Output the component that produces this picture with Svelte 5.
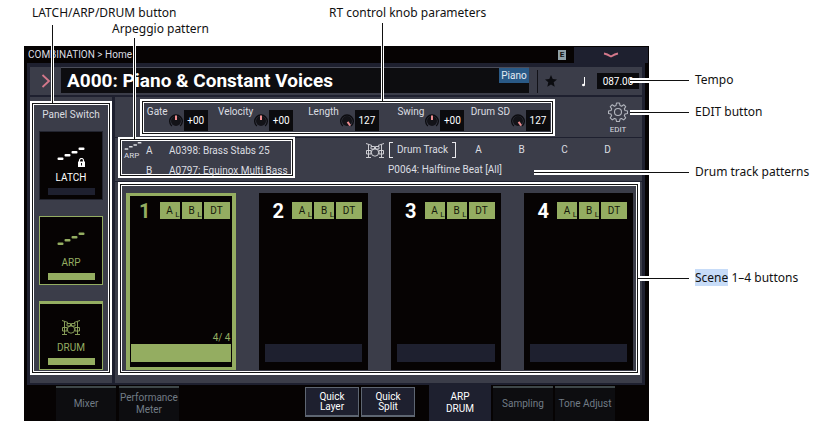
<script>
  const knobs = [
    { label: 'Gate', value: '+00', angle: 0 },
    { label: 'Velocity', value: '+00', angle: 0 },
    { label: 'Length', value: '127', angle: 145 },
    { label: 'Swing', value: '+00', angle: 0 },
    { label: 'Drum SD', value: '127', angle: 145 }
  ];
  const scenes = [1, 2, 3, 4];
  const patterns = ['A', 'B', 'C', 'D'];
  let active = $state(1);
</script>

{#snippet steps()}
  <svg class="steps" viewBox="0 0 28 16" aria-hidden="true">
    <g fill="currentColor">
      <rect x="0.500" y="11.500" width="6" height="2.500" rx="1" />
      <rect x="7.500" y="8" width="6" height="2.500" rx="1" />
      <rect x="14.500" y="5" width="6" height="2.500" rx="1" />
      <rect x="21.500" y="1.500" width="6" height="2.500" rx="1" />
    </g>
  </svg>
{/snippet}

{#snippet drums()}
  <svg class="drums" viewBox="0 0 20 16" aria-hidden="true" fill="none" stroke="currentColor" stroke-width="0.900">
    <circle cx="10" cy="10.500" r="3.700" />
    <path d="M1 1.500l6 2M13 3.500l6-2M3.500 2.500V15M16.500 2.500V15M1 15.500h5M14 15.500h5" />
    <path d="M6 4.500h3.500V7H6zM10.500 4.500H14V7h-3.500z" />
    <path d="M1.500 8.500H6V12H1.500zM14 8.500h4.500V12H14z" />
  </svg>
{/snippet}

<div class="figure">
  <div class="notes">
    <div class="first"><span>LATCH/ARP/DRUM button</span><span>RT control knob parameters</span></div>
    <div class="second">Arpeggio pattern</div>
  </div>

  <div class="stage">
    <main class="screen">
      <header>
        <span class="crumb">COMBINATION &gt; Home</span>
        <span class="ext">E</span>
        <button class="pull" aria-label="Open menu">
          <svg width="18" height="6" viewBox="0 0 18 6" fill="none" stroke="#d4788b" stroke-width="1.800"><path d="M2 1.500Q5 2 9 4.500Q13 2 16 1.500" /></svg>
        </button>
      </header>

      <div class="panel">
        <div class="titlebar">
          <button class="go" aria-label="Select program">
            <svg width="10" height="16" viewBox="0 0 10 16" fill="none" stroke="#d4788b" stroke-width="1.800"><path d="M1.500 2l6.500 6-6.500 6" /></svg>
          </button>
          <div class="title"><h1>A000: Piano &amp; Constant Voices</h1><span class="cat">Piano</span></div>
          <i class="bar"></i>
          <button class="star" aria-label="Favorite">
            <svg width="12" height="12" viewBox="0 0 12 12"><path fill="#0b0c10" d="M6 0l1.700 4.100 4.300.3-3.300 2.900 1 4.400L6 9.400l-3.700 2.300 1-4.400L0 4.400l4.300-.3z" /></svg>
          </button>
          <svg class="note" width="6" height="11" viewBox="0 0 6 11"><path d="M4 1h1v8H4z" fill="#fff" /><ellipse cx="3.500" cy="9" rx="1.500" ry="1.200" fill="#fff" /></svg>
          <input class="tempo" aria-label="Tempo" value="087.00" />
        </div>

        <div class="columns">
          <section class="side">
            <div class="frame switches">
              <h2>Panel Switch</h2>
              <button class="switch latch">
                <span class="pic">{@render steps()}
                  <svg class="lock" width="7" height="9" viewBox="0 0 7 9"><path d="M1.500 4V2.500a2 2 0 014 0V4" fill="none" stroke="#fff" stroke-width="1.200" /><path d="M0 3.500h7V9H0z" fill="#fff" /><path d="M3 5h1v2.500H3z" fill="#111" /></svg>
                </span>
                <span>LATCH</span><i></i>
              </button>
              <button class="switch on"><span class="pic">{@render steps()}</span><span>ARP</span><i></i></button>
              <button class="switch on drum"><span class="pic">{@render drums()}</span><span>DRUM</span><i></i></button>
            </div>
          </section>

          <section class="content">
            <div class="controls">
              <div class="frame knobs">
                {#each knobs as knob}
                  <label class="knob">
                    <span>{knob.label}</span>
                    <svg width="14" height="14" viewBox="0 0 14 14">
                      <circle cx="7" cy="7" r="5" fill="#131318" />
                      <path d="M2.800 12A6.300 6.300 0 1111.200 12" fill="none" stroke="#0c0c10" stroke-width="1.400" />
                      <path d="M7 1.500V6" stroke="#f08d90" stroke-width="2" transform="rotate({knob.angle} 7 7)" />
                    </svg>
                    <input value={knob.value} />
                  </label>
                {/each}
              </div>
              <button class="edit">
                <svg width="20" height="20" viewBox="0 0 20 20" fill="none" stroke="#b3b6be" stroke-width="1.100" stroke-linejoin="round">
                  <path d="M8.500 1h3l.5 2.500 1.600.7L15.700 2.700l2 2-1.400 2.200.7 1.600 2.500.5v2.500l-2.500.5-.7 1.700 1.400 2.100-2 2.100-2.200-1.400-1.500.6-.5 2.400h-3L8 17.100l-1.600-.6-2.100 1.400-2.100-2.100 1.400-2.100-.7-1.700L.5 11.500V9L3 8.500l.7-1.600L2.300 4.700l2-2L6.400 4.200 8 3.500z" />
                  <circle cx="10" cy="10" r="3.500" />
                </svg>
                <span>EDIT</span>
              </button>
            </div>

            <div class="assign">
              <div class="frame arps">
                <div class="arpmark">{@render steps()}<b>ARP</b></div>
                <dl><dt>A</dt><dd>A0398: Brass Stabs 25</dd><dt>B</dt><dd>A0797: Equinox Multi Bass</dd></dl>
              </div>
              <div class="track">
                <div class="trackrow">
                  {@render drums()}
                  <span class="bracket">Drum Track</span>
                  <div class="abcd">{#each patterns as p}<span>{p}</span>{/each}</div>
                </div>
                <p>P0064: Halftime Beat [All]</p>
              </div>
            </div>

            <div class="scenes">
              <div class="frame pads">
                {#each scenes as n}
                  <button class="scene" class:active={active === n} onclick={() => (active = n)}>
                    <span class="top"><b>{n}</b><span class="chips"><em>A<small>L</small></em><em>B<small>L</small></em><em class="dt">DT</em></span></span>
                    {#if active === n}<span class="beat">4/ 4</span>{/if}
                    <i></i>
                  </button>
                {/each}
              </div>
            </div>
          </section>
        </div>
      </div>

      <nav>
        <button class="tab mixer">Mixer</button>
        <button class="tab">Performance<br />Meter</button>
        <span class="quick"><button>Quick<br />Layer</button><button>Quick<br />Split</button></span>
        <button class="tab current">ARP<br />DRUM</button>
        <button class="tab">Sampling</button>
        <button class="tab">Tone Adjust</button>
      </nav>
    </main>

    <aside>
      <div class="callout to-tempo">Tempo</div>
      <div class="callout to-edit">EDIT button</div>
      <div class="callout to-drum">Drum track patterns</div>
      <div class="callout to-scene"><mark>Scene</mark> 1–4 buttons</div>
    </aside>
  </div>
</div>

<style>
  :global(body) { margin: 0; background: #fff; }
  *, *::before, *::after { box-sizing: border-box; }
  button, input { font: inherit; color: inherit; border: 0; padding: 0; margin: 0; border-radius: 0; }
  button { cursor: pointer; background: none; }
  svg { display: block; }
  h1, h2, p, dl, dd { margin: 0; font-weight: 400; }
  i, em { font-style: normal; }

  .figure { min-width: 800px; color: #111; font: 12px/16px "Noto Sans", "Open Sans", sans-serif; padding-bottom: 18px; }
  .notes { height: 46px; padding: 5px 0 0 32px; }
  .first { display: flex; }
  .first span:first-child { width: 297px; }
  .second { padding-left: 80px; }
  .stage { display: flex; padding-left: 24px; }

  .screen { flex: 1; min-width: 0; background: #060303; color: #dcdde1; font: 10px/12px Roboto, sans-serif; padding: 0 4px 0 3px; }
  header { display: flex; align-items: center; height: 17px; }
  .crumb { flex: 1; padding-left: 1px; }
  .ext { background: #8fa0a8; color: #111; font-size: 8px; line-height: 10px; width: 8px; text-align: center; font-weight: 700; }
  .pull { width: 74px; height: 16px; margin: 0 -3px 0 8px; background: #1e202f; display: grid; place-items: center; }

  .panel { background: #1e202f; padding: 4px 3px 2px; }
  .titlebar { display: flex; align-items: center; height: 28px; background: #3b3d49; padding-right: 3px; margin-bottom: 2px; }
  .go { width: 31px; display: grid; place-items: center; }
  .title { flex: 1; height: 26px; align-self: flex-start; background: #0d0d10; display: flex; justify-content: space-between; border-top: 1px solid #4b4d59; }
  h1 { font-size: 19px; line-height: 26px; font-weight: 700; color: #fff; padding-left: 6px; white-space: nowrap; }
  .cat { width: 30px; height: 15px; background: #2a5a87; color: #e4ebf2; line-height: 15px; text-align: center; }
  .bar { width: 1px; height: 23px; background: #121218; margin: 0 7px 0 8px; }
  .note { margin: 0 11px 0 23px; }
  .tempo { width: 42px; height: 16px; background: #0b0b0e; color: #fff; text-align: center; }

  .columns { display: flex; gap: 3px; }
  .side { width: 82px; background: #3b3d49; padding: 4px 0 8px; }
  .frame { position: relative; border: 2px solid #fff; box-shadow: inset 0 0 0 1px #151515, inset 0 0 0 2px #fff; padding: 2px; }
  .switches::before, .knobs::before, .arps::before { content: ""; position: absolute; z-index: 2; bottom: 100%; width: 3px; background: #111; border: solid #fff; border-width: 0 1px; }
  .switches::before { left: 19px; height: 78px; }
  .knobs::before { left: 239px; height: 78px; }
  .arps::before { left: 13px; height: 101px; }
  .switches { height: 274px; padding: 2px 7px 3px; display: flex; flex-direction: column; justify-content: space-between; }
  h2 { font-size: 10px; line-height: 20px; text-align: center; margin: 0 -6px; white-space: nowrap; }
  .switch { height: 69px; background: #060303; border: 1px solid #22242f; display: flex; flex-direction: column; align-items: center; padding-bottom: 4px; }
  .switch.latch { color: #fff; margin-top: -10px; }
  .switch i { width: 47px; height: 7px; background: #1e202f; margin-top: 4px; }
  .switch.on { color: #94ad61; border-color: #94ad61; }
  .switch.on i { background: #94ad61; }
  .switch.drum { border-top-width: 3px; }
  .pic { flex: 1; position: relative; display: grid; place-items: center; padding-top: 4px; }
  .drum .pic { padding-top: 8px; }
  .steps { width: 28px; height: 16px; }
  .drums { width: 20px; height: 16px; }
  .lock { position: absolute; right: 0; bottom: 5px; }

  .content { flex: 1; min-width: 0; display: flex; flex-direction: column; gap: 1px; }
  .content > div { background: #3b3d49; }
  .controls { height: 40px; display: flex; justify-content: space-between; padding: 2px 13px 0 25px; }
  .knobs { width: 415px; height: 37px; display: grid; grid-template-columns: 64fr repeat(4, 86fr); padding: 2px 3px 2px 2px; }
  .knob { display: flex; justify-content: flex-end; align-items: flex-end; gap: 1px; padding-bottom: 1px; }
  .knob span { align-self: flex-start; padding-top: 3px; white-space: nowrap; }
  .knob svg { margin-bottom: 3px; }
  .knob input { width: 24px; height: 21px; background: #0b0b0e; text-align: center; color: #fff; }
  .edit { display: flex; flex-direction: column; align-items: center; font-size: 8px; line-height: 12px; padding: 3px 0 0; width: 22px; gap: 2px; }

  .assign { height: 43px; display: flex; padding-left: 3px; white-space: nowrap; }
  .arps { width: 177px; height: 41px; margin-top: -1px; display: flex; padding: 0 2px; }
  .arpmark { width: 16px; margin: 2px 6px 0 2px; }
  .arpmark .steps { width: 18px; height: 10px; }
  .arpmark b { display: block; font-size: 8px; line-height: 9px; font-weight: 400; }
  dl { display: grid; grid-template-columns: 23px auto; line-height: 20px; padding-top: 2px; }
  .track { flex: 1; padding-left: 70px; line-height: 20px; }
  .trackrow { display: flex; align-items: center; height: 22px; padding-top: 2px; }
  .track p { padding-left: 23px; }
  .bracket { position: relative; margin-left: 4px; width: 67px; height: 16px; line-height: 16px; text-align: center; }
  .bracket::before, .bracket::after { content: ""; position: absolute; top: 0; width: 4px; height: 16px; border: 1px solid #e8e8ec; }
  .bracket::before { left: 0; border-right: 0; }
  .bracket::after { right: 0; border-left: 0; }
  .abcd { flex: 1; display: grid; grid-template-columns: repeat(4, 1fr); text-align: center; padding: 0 13px 0 1px; }

  .scenes { padding: 0 2px 8px 3px; }
  .pads { height: 193px; display: grid; grid-template-columns: repeat(4, 1fr); gap: 23px; padding: 9px 5px 3px 6px; }
  .scene { display: flex; flex-direction: column; background: #060303; color: #fff; padding: 9px 6px 8px; min-width: 0; }
  .scene i { height: 18px; background: #1e202f; }
  .top { display: flex; justify-content: space-between; flex: 1; }
  .top b { font-size: 20px; line-height: 18px; padding-left: 8px; font-weight: 700; }
  .chips { display: flex; gap: 2px; height: 17px; }
  .chips em { position: relative; width: 20px; background: #94ad61; color: #14180b; line-height: 17px; text-align: center; }
  .chips .dt { width: 26px; }
  small { position: absolute; right: 0; bottom: 0; font-size: 8px; line-height: 9px; }
  .scene.active { border: solid #94ad61; border-width: 3px 4px; padding: 6px 1px 5px; color: #94ad61; }
  .scene.active i { background: #94ad61; }
  .active .chips { padding-right: 1px; }
  .beat { text-align: right; }

  nav { display: flex; align-items: flex-start; height: 36px; padding: 1px 30px 0 29px; gap: 2px; line-height: 12px; }
  nav .tab { width: 60px; height: 35px; flex: none; background: #0d0d10; border-top: 2px solid #3e4749; color: #717c86; padding-bottom: 2px; }
  .mixer { margin-right: 1px; }
  nav .current { background: #1e202f; border-color: #1e202f; color: #fff; width: 62px; margin-top: -1px; height: 36px; }
  .quick { flex: 1; display: flex; justify-content: flex-end; gap: 2px; padding: 1px 12px 0 0; }
  .quick button { width: 54px; height: 30px; background: #1e202f; border: 1px solid #5e6672; border-bottom-width: 2px; color: #fff; line-height: 10px; }

  aside { width: 175px; padding: 26px 0 0 46px; }
  .callout { position: relative; white-space: nowrap; }
  .callout::before { content: ""; position: absolute; top: 6px; right: calc(100% + 6px); height: 5px; background: #111; border: solid #fff; border-width: 2px 0; }
  .to-tempo::before { width: 59px; }
  .to-edit { margin-top: 16px; }
  .to-edit::before { width: 59px; }
  .to-drum { margin-top: 44px; }
  .to-drum::before { width: 155px; }
  .to-scene { margin-top: 90px; }
  .to-scene::before { width: 51px; }
  mark { background: #c7dcf8; color: inherit; }
</style>
